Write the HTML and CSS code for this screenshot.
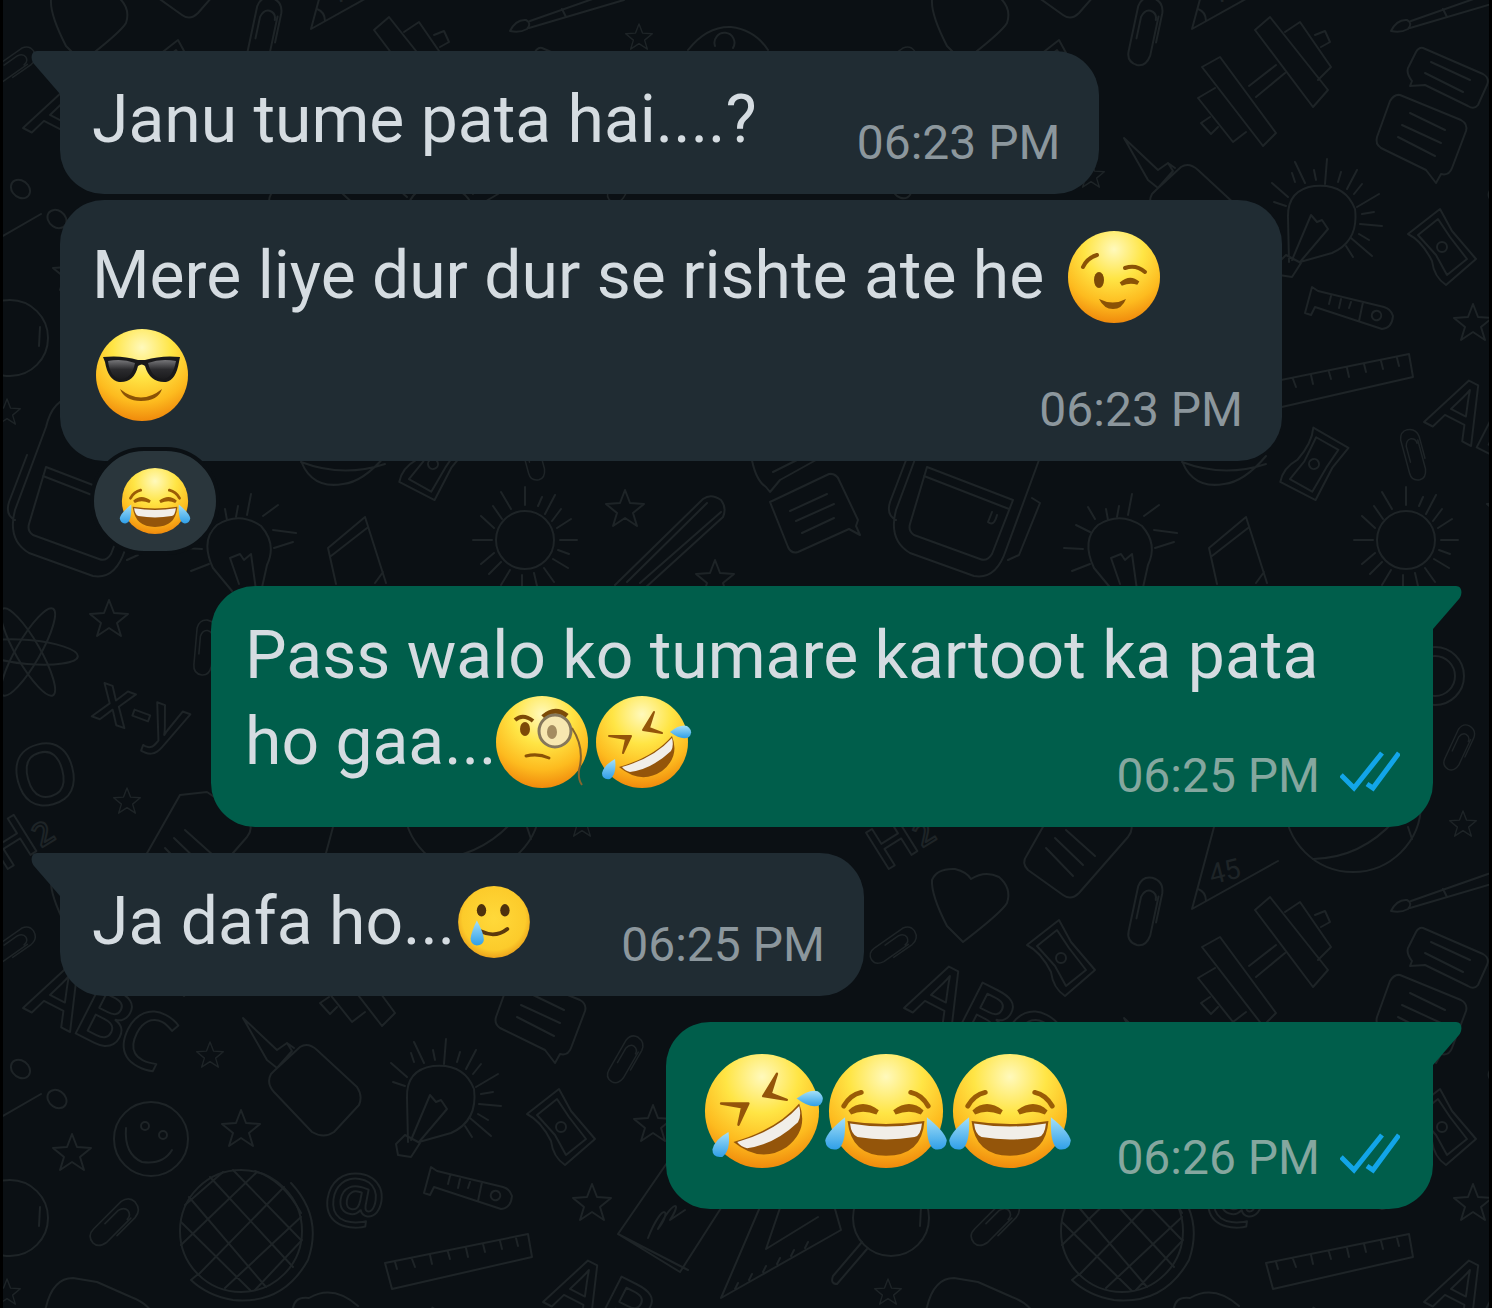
FILE: index.html
```
<!DOCTYPE html>
<html lang="en">
<head>
  <meta charset="UTF-8" />
  <meta name="viewport" content="width=device-width, initial-scale=1.0"/>
  <title>Chat</title>
  <link rel="stylesheet" href="styles.css">
</head>
<body>
  <svg class="doodles" aria-hidden="true">
    <defs>
      <radialGradient id="face" cx="0.5" cy="0.2" r="0.8">
        <stop offset="0" stop-color="#fff9bc"/>
        <stop offset="0.4" stop-color="#ffe545"/>
        <stop offset="0.75" stop-color="#fdbb1f"/>
        <stop offset="1" stop-color="#f08a0c"/>
      </radialGradient>
      <radialGradient id="flat" cx="0.5" cy="0.45" r="0.55">
        <stop offset="0" stop-color="#ffd93a"/>
        <stop offset="0.8" stop-color="#fccb2b"/>
        <stop offset="1" stop-color="#eda51c"/>
      </radialGradient>
      <linearGradient id="tear" x1="0" y1="0" x2="0" y2="1">
        <stop offset="0" stop-color="#a5e0f8"/>
        <stop offset="1" stop-color="#2f9fe8"/>
      </linearGradient>
      <linearGradient id="lens" x1="0" y1="0" x2="0" y2="1">
        <stop offset="0" stop-color="#77777a"/>
        <stop offset="0.5" stop-color="#2b2b2e"/>
        <stop offset="1" stop-color="#1b1b1d"/>
      </linearGradient>

      <symbol id="wink" viewBox="0 0 100 100">
        <circle cx="50" cy="50" r="46" fill="url(#face)"/>
        <g fill="none" stroke="#8a5206" stroke-width="4" stroke-linecap="round">
          <path d="M19 40Q23 31 33 28"/>
          <path d="M61 41Q72 37 81 45"/>
          <path d="M57 57Q66 49 74 56Q66 53 57 57Z" fill="#8a5206"/>
        </g>
        <ellipse cx="35" cy="53" rx="5" ry="8" fill="#7c4a07"/>
        <path d="M35 72Q49 79 62 72Q58 82 49 82Q40 82 35 72Z" fill="#8a5206"/>
      </symbol>

      <symbol id="cool" viewBox="0 0 100 100">
        <circle cx="50" cy="50" r="46" fill="url(#face)"/>
        <path d="M28 64Q49 81 70 64Q66 76 49 76Q33 76 28 64Z" fill="#8a5206"/>
        <path d="M11 32Q30 30 46 35H53Q70 30 88 32L87 37Q84 55 74 57Q58 58 53 41Q50 38 46 41Q42 58 27 57Q16 55 13 37Z" fill="#19191b"/>
        <path d="M16 36Q30 33 43 38Q40 54 28 54Q18 52 16 36ZM84 36Q69 33 56 38Q60 54 72 54Q81 52 84 36Z" fill="url(#lens)"/>
      </symbol>

      <symbol id="joy" viewBox="0 0 100 100">
        <circle cx="50" cy="50" r="46" fill="url(#face)"/>
        <g fill="none" stroke="#9a5c06" stroke-width="4" stroke-linecap="round">
          <path d="M16 46Q21 37 30 35"/>
          <path d="M70 35Q79 37 84 46"/>
          <path d="M21 51Q31 42 43 51Q31 46 21 51Z" fill="#9a5c06"/>
          <path d="M57 51Q69 42 79 51Q69 46 57 51Z" fill="#9a5c06"/>
        </g>
        <path d="M19 58Q50 63 81 58Q79 86 50 86Q22 86 19 58Z" fill="#94550a"/>
        <path d="M21 60Q50 65 79 60Q78 70 73 71Q50 75 27 71Q22 69 21 60Z" fill="#f1eee8"/>
        <path d="M17 55Q2 67 1 74Q2 82 10 81Q18 79 17 55Z" fill="url(#tear)"/>
        <path d="M83 55Q98 67 99 74Q98 82 90 81Q82 79 83 55Z" fill="url(#tear)"/>
      </symbol>

      <symbol id="rofl" viewBox="0 0 100 100">
        <circle cx="50" cy="50" r="46" fill="url(#face)"/>
        <g fill="#94550a" stroke="#94550a" stroke-width="2" stroke-linejoin="round">
          <path d="M17 44L39 44L31 61L34 47Z"/>
          <path d="M62 20L51 38L70 41L57 36Z"/>
        </g>
        <path d="M27 75Q62 65 80 44Q88 65 70 79Q49 93 27 75Z" fill="#94550a"/>
        <path d="M30 75Q62 66 80 46Q82 54 79 59Q60 77 38 80Q33 79 30 75Z" fill="#f1eee8"/>
        <path d="M78 40Q88 32 95 34Q102 39 97 45Q90 49 78 40Z" fill="url(#tear)"/>
        <path d="M23 67Q25 82 18 87Q10 88 10 81Q12 73 23 67Z" fill="url(#tear)"/>
      </symbol>

      <symbol id="monocle" viewBox="0 0 100 100">
        <circle cx="50" cy="50" r="46" fill="url(#face)"/>
        <path d="M23 28Q31 21 41 29" fill="none" stroke="#7c4a07" stroke-width="4"/>
        <ellipse cx="33" cy="37" rx="5" ry="7" fill="#7c4a07"/>
        <path d="M51 25Q63 14 75 24" fill="none" stroke="#7c4a07" stroke-width="5"/>
        <circle cx="63" cy="39" r="16" fill="#f7e7b0" stroke="#85775c" stroke-width="3"/>
        <ellipse cx="60" cy="40" rx="5" ry="7" fill="#a48c60"/>
        <path d="M80 36Q93 56 87 78Q86 88 90 93" fill="none" stroke="#85652e" stroke-width="2"/>
        <path d="M34 64Q46 61 57 66" fill="none" stroke="#8a5206" stroke-width="3" stroke-linecap="round"/>
      </symbol>

      <symbol id="tearful" viewBox="0 0 100 100">
        <circle cx="50" cy="50" r="46" fill="url(#flat)"/>
        <ellipse cx="34" cy="35" rx="6" ry="8" fill="#4e310d"/>
        <ellipse cx="64" cy="35" rx="6" ry="8" fill="#4e310d"/>
        <path d="M33 62Q52 71 67 59" fill="none" stroke="#5b380c" stroke-width="5" stroke-linecap="round"/>
        <path d="M28 48Q37 64 37 73Q36 80 28 80Q20 79 20 71Q21 62 28 48Z" fill="url(#tear)"/>
      </symbol>

      <symbol id="ticks" viewBox="0 0 60 42">
        <path d="M1 24L14 37L42 2M27 33L33 37L59 2" fill="none" stroke="#12a5e8" stroke-width="5"/>
      </symbol>

      <path id="star" d="M0-20L5-7L19-6L8 3L12 16L0 8L-12 16L-8 3L-19-6L-5-7Z"/>
      <path id="clip" d="M10-18V22Q8 34-1 34Q-12 33-12 22V-24Q-10-35 0-35Q12-34 13-22V8M-7 8V-14Q-5-22 1-22Q8-21 8-14"/>
      <path id="sharpener" d="M-2-38L10-16L34 12L4 38Q-8 30-10 14Q-20-6-34-13ZM-4-28L8-10L25 12L5 28L-6 8L-24-12ZM-5 0A5 5 0 1 0 5 0A5 5 0 1 0-5 0"/>

      <!-- one wallpaper tile, 881 x 880 -->
      <g id="tile">
        <path d="M944 926Q928 895 929 880Q934 868 952 869Q964 872 968 879Q982 870 996 877Q1009 888 1004 903Q999 912 960 942Z"/>
        <path d="M1252 30L1267 17L1325 90L1310 107ZM1282 32L1297 22L1328 67L1315 80M1312 35L1322 31L1327 42L1318 47M1199 67L1217 57L1273 133L1260 146ZM1212 88L1195 98L1230 142L1243 132M1207 117L1198 123L1208 134L1215 127M1246 86L1273 65M1253 97L1282 73"/>
        <path d="M1420 48L1480 74Q1487 78 1484 85L1475 105Q1471 110 1465 106L1422 85L1407 86L1409 81Q1402 72 1406 66L1413 52Q1416 47 1420 48ZM1428 62L1467 80M1422 73L1460 92"/>
        <path d="M1397 95L1458 120Q1465 124 1463 131L1449 168Q1446 176 1438 174L1433 183L1423 170L1378 148Q1372 144 1374 137L1387 101Q1391 94 1397 95ZM1407 113L1442 130M1399 125L1438 143M1395 137L1432 156"/>
        <path d="M240 1018L274 1050L284 1043L289 1051L274 1068L264 1060ZM284 1043L291 1048M272 1070L297 1047Q305 1042 314 1050L354 1087Q360 1096 356 1105L331 1132Q321 1139 309 1132L271 1092Q263 1083 268 1074Z"/>
        <g>
          <path d="M405 1142L404 1098Q403 1070 430 1066Q461 1063 471 1089Q475 1121 448 1133L416 1142M408 1140L427 1095L433 1102L438 1100L444 1109L416 1142M402 1135L417 1143L408 1157L395 1155L393 1144Z"/>
          <path d="M388 1063L404 1077M411 1042L421 1063M443 1039L441 1064M473 1050L463 1069M495 1074L473 1087M498 1106L476 1104M488 1136L467 1118M390 1082L402 1086M408 1053L411 1062M430 1050L432 1060M457 1052L454 1062M478 1064L470 1074M490 1092L478 1094M485 1120L475 1114M469 1137L462 1126"/>
        </g>
        <use href="#sharpener" x="558" y="1127"/>
        <use href="#sharpener" x="1058" y="958"/>
        <use href="#sharpener" transform="translate(430 464) rotate(68)"/>
        <path d="M428 1167L421 1193L427 1195L431 1187L498 1209Q508 1208 509 1196Q507 1189 500 1187L434 1171ZM447 1176L445 1184M457 1179L455 1188M467 1182L465 1188M479 1182L475 1201M488 1194A4 4 0 1 0 497 1197A4 4 0 1 0 488 1194"/>
        <path d="M382 1263L525 1234L529 1257L389 1289ZM392 1262L394 1269M409 1259L412 1267M427 1255L429 1264M445 1252L447 1259M463 1248L465 1257M480 1244L482 1252M497 1241L499 1249M513 1238L515 1246"/>
        <circle cx="148" cy="1139" r="37"/>
        <circle cx="142" cy="1126" r="4"/>
        <circle cx="160" cy="1135" r="4"/>
        <path d="M123 1128Q121 1154 139 1162Q160 1165 169 1150"/>
        <circle cx="238" cy="1231" r="61"/>
        <path d="M288 1183Q320 1217 305 1260Q280 1305 230 1300Q205 1296 188 1280L194 1275M207 1177L290 1267M186 1197L263 1287M178 1222L248 1291M230 1170L298 1240M252 1171Q280 1180 298 1213M281 1187L195 1275M254 1172L178 1245M298 1217L222 1288M299 1240L252 1290M182 1205L220 1172"/>
        <text class="sketch" x="321" y="1222" font-size="68" transform="rotate(8 353 1200)">@</text>
        <circle cx="888" cy="1218" r="38"/>
        <path d="M859 1242L830 1276Q827 1284 834 1284L864 1249M918 1207L917 1226"/>
        <use href="#star" x="650" y="1125"/>
        <use href="#star" x="589" y="1204"/>
        <use href="#star" x="238" y="1130"/>
        <use href="#star" x="69" y="1154"/>
        <use href="#star" transform="translate(207 1056) scale(.7)"/>
        <use href="#star" x="622" y="510"/>
        <use href="#star" x="106" y="620"/>
        <use href="#star" x="712" y="580"/>
        <use href="#star" transform="translate(124 802) scale(.7)"/>
        <use href="#star" transform="translate(1460 825) scale(.7)"/>
        <use href="#star" transform="translate(636 38) scale(.7)"/>
        <use href="#star" transform="translate(885 1293) scale(.7)"/>
        <use href="#clip" transform="translate(1142 912) rotate(12)"/>
        <use href="#clip" transform="translate(622 1060) rotate(30) scale(.75)"/>
        <use href="#clip" transform="translate(111 1223) rotate(45) scale(.85)"/>
        <use href="#clip" transform="translate(890 946) rotate(55) scale(.75)"/>
        <use href="#clip" transform="translate(1411 455) rotate(-15) scale(.75)"/>
        <use href="#clip" transform="translate(1456 748) rotate(25) scale(.7)"/>
        <use href="#clip" transform="translate(202 648) rotate(5) scale(.8)"/>
        <g class="sketch" font-size="80">
          <text transform="translate(20 1008) rotate(27)">A</text>
          <text transform="translate(66 1030) rotate(27)">B</text>
          <text transform="translate(108 1052) rotate(27)">C</text>
          <text transform="translate(540 1302) rotate(27)">A</text>
          <text transform="translate(586 1324) rotate(27)">B</text>
        </g>
        <path d="M0 1116L38 1094M63 1098A10 8 40 1 0 45 1100A10 8 40 1 0 63 1098M27 1072A10 8 40 1 0 8 1066A10 8 40 1 0 27 1072"/>
        <path d="M1211 827L1189 909L1275 861M1195 889Q1203 892 1203 901"/>
        <text class="angle" x="1206" y="882" font-size="28" transform="rotate(-14 1218 872)">45</text>
        <circle cx="1350" cy="804" r="68"/>
        <path d="M1310 859Q1358 858 1392 820M1405 827L1409 839"/>
        <path d="M1388 911Q1394 899 1404 900Q1410 903 1405 909Q1398 913 1388 911ZM1408 901L1502 868M1407 908L1502 880M1440 889L1444 897"/>
        <path d="M1058 795L1024 855Q1018 863 1025 870L1060 895Q1068 901 1076 893L1125 837Q1132 828 1126 820L1085 792ZM1043 848L1070 876M1052 838L1080 865M1063 830L1092 856"/>
        <path d="M767 502L826 474Q833 473 836 480L855 520L853 526L857 535L846 529L795 552Q788 554 785 547ZM787 511L824 494M793 521L831 504M799 533L831 518M748 455Q752 480 763 487L767 492L777 480L822 455M770 472L800 457"/>
        <path d="M43 427Q50 398 70 398L94 402L128 417Q158 428 155 460L122 550Q112 580 90 576L26 553Q4 540 12 510ZM43 467L129 500L108 554Q103 562 96 559L30 535Q24 531 26 524ZM40 476L125 509M24 455L6 502Q2 515 12 520M148 498L156 503L135 555L124 560M108 512L104 522Q110 527 113 515"/>
        <path d="M296 455Q306 490 340 484Q360 482 382 456M298 462Q340 478 382 464"/>
        <g>
          <path d="M229 591L210 568Q197 540 214 525Q236 511 258 526Q274 544 264 565L258 592M236 584L227 558L237 554L241 560L248 554L253 590"/>
          <path d="M222 509L224 520M235 506L233 517M248 494L244 515M260 516L275 505M270 530L293 533M271 548L290 542M188 571L206 564M180 548L199 549M192 525L206 532M204 507L211 519"/>
        </g>
        <circle cx="522" cy="540" r="29"/>
        <path d="M522 505V487M535 506L539 497M542 514L552 495M549 521L558 509M554 528L568 519M557 540H574M555 550L566 554M550 559L565 568M541 568L551 582M531 573L534 586M519 575V588M507 570L498 585M498 562L486 574M491 553L478 564M489 540H470M491 528L478 516M499 519L490 506M508 509L498 492"/>
        <path d="M333 584L325 548L362 517L383 583M328 556L364 528M372 583L380 572"/>
        <path d="M612 585L700 499Q708 493 718 500Q724 508 720 517L642 588M624 582L704 503M637 583L718 512"/>
        <path d="M685 1270L615 1234L666 1160M615 1234L677 1272L727 1194M645 1238C660 1200 670 1210 655 1229C670 1200 680 1200 667 1220L682 1210"/>
        <path d="M760 1200L718 1298L838 1230L828 1195M778 1205L763 1249L815 1217M732 1289L735 1283M746 1280L749 1274M760 1272L763 1266M774 1264L777 1258M788 1256L791 1250M802 1248L805 1242"/>
        <ellipse cx="25" cy="652" rx="12" ry="50" transform="rotate(30 25 652)"/>
        <ellipse cx="25" cy="652" rx="12" ry="50" transform="rotate(95 25 652)"/>
        <ellipse cx="25" cy="652" rx="12" ry="50" transform="rotate(-30 25 652)"/>
        <g class="sketch">
          <text transform="translate(88 716) rotate(20)" font-size="66">x-y</text>
          <text transform="translate(18 812) rotate(-15)" font-size="84">O</text>
          <text transform="translate(0 872) rotate(-32)" font-size="60">H<tspan font-size="32">2</tspan></text>
        </g>
        <circle cx="1432" cy="676" r="29"/>
        <circle cx="1432" cy="676" r="20"/>
        <path d="M685 50Q704 26 728 27Q752 30 765 50M712 46A10 10 0 1 1 730 48"/>
        <path d="M290 1308Q292 1296 306 1298Q330 1284 355 1306"/>
      </g>
    </defs>

    <g class="wallpaper">
      <use href="#tile" x="-881" y="-880"/>
      <use href="#tile" y="-880"/>
      <use href="#tile" x="881" y="-880"/>
      <use href="#tile" x="-881"/>
      <use href="#tile"/>
      <use href="#tile" x="881"/>
      <use href="#tile" x="-881" y="880"/>
      <use href="#tile" y="880"/>
      <use href="#tile" x="881" y="880"/>
    </g>
  </svg>

  <main class="chat">
    <div class="bubble in">
      <svg class="tail" viewBox="0 0 30 44" aria-hidden="true"><path d="M30 0H6C0 0-1 8 3 13L29 43H30Z"/></svg>
      <div class="line last">
        <span class="text">Janu tume pata hai....?</span>
        <time class="meta">06:23 PM</time>
      </div>
    </div>

    <div class="bubble in wide follow">
      <div class="line tall">
        <span class="text">Mere liye dur dur se rishte ate he</span>
        <svg class="emoji spaced" role="img" aria-label="winking face"><use href="#wink"/></svg>
      </div>
      <div class="line tall last">
        <svg class="emoji" role="img" aria-label="smiling face with sunglasses"><use href="#cool"/></svg>
        <time class="meta">06:23 PM</time>
      </div>
    </div>
    <button class="reaction" type="button" aria-label="Reaction: tears of joy">
      <svg class="emoji small" aria-hidden="true"><use href="#joy"/></svg>
    </button>

    <div class="bubble out wide">
      <svg class="tail" viewBox="0 0 30 44" aria-hidden="true"><path d="M0 0H24C30 0 31 8 27 13L1 43H0Z"/></svg>
      <div class="line">
        <span class="text">Pass walo ko tumare kartoot ka pata</span>
      </div>
      <div class="line last">
        <span class="text">ho gaa...</span>
        <svg class="emoji" role="img" aria-label="face with monocle"><use href="#monocle"/></svg>
        <svg class="emoji" role="img" aria-label="rolling on the floor laughing"><use href="#rofl"/></svg>
        <span class="meta"><time>06:25 PM</time><svg class="ticks" role="img" aria-label="Read"><use href="#ticks"/></svg></span>
      </div>
    </div>

    <div class="bubble in">
      <svg class="tail" viewBox="0 0 30 44" aria-hidden="true"><path d="M30 0H6C0 0-1 8 3 13L29 43H30Z"/></svg>
      <div class="line last">
        <span class="text">Ja dafa ho...</span>
        <svg class="emoji medium" role="img" aria-label="smiling face with tear"><use href="#tearful"/></svg>
        <time class="meta">06:25 PM</time>
      </div>
    </div>

    <div class="bubble out">
      <svg class="tail" viewBox="0 0 30 44" aria-hidden="true"><path d="M0 0H24C30 0 31 8 27 13L1 43H0Z"/></svg>
      <div class="line big last">
        <svg class="emoji large" role="img" aria-label="rolling on the floor laughing"><use href="#rofl"/></svg>
        <svg class="emoji large" role="img" aria-label="tears of joy"><use href="#joy"/></svg>
        <svg class="emoji large" role="img" aria-label="tears of joy"><use href="#joy"/></svg>
        <span class="meta"><time>06:26 PM</time><svg class="ticks" role="img" aria-label="Read"><use href="#ticks"/></svg></span>
      </div>
    </div>
  </main>
</body>
</html>
```
FILE: styles.css
```
* {
  box-sizing: border-box;
}

body {
  margin: 0;
  min-height: 100vh;
  position: relative;
  overflow-x: hidden;
  background-color: #0b1014;
  border: solid #000;
  border-width: 0 3px;
  font-family: Roboto, sans-serif;
  color: #d5dce1;
}

/* wallpaper */
.doodles {
  position: absolute;
  top: 0;
  left: 0;
  width: 100%;
  height: 100%;
}

.wallpaper {
  fill: none;
  stroke: #1e2427;
  stroke-width: 2;
  stroke-linejoin: round;
  stroke-linecap: round;
}

.sketch {
  font-family: "Open Sans", sans-serif;
  font-weight: 600;
}

.angle {
  fill: #1e2427;
  stroke: none;
}

.chat {
  position: relative;
  display: flex;
  flex-direction: column;
  align-items: flex-start;
  gap: 26px;
  padding: 51px 56px 64px 57px;
}

/* bubbles */
.bubble {
  position: relative;
  padding: 26px 39px 23px 32px;
  border-radius: 44px;
  background-color: #202c33;
}

.in {
  border-top-left-radius: 0;
}

.out {
  align-self: flex-end;
  padding: 27px 33px 23px 34px;
  border-top-right-radius: 0;
  background-color: #005e4b;
}

.follow {
  margin-top: -20px;
  padding-top: 28px;
  border-top-left-radius: 44px;
}

.wide {
  width: 89%;
}

.tail {
  position: absolute;
  top: 0;
  width: 30px;
  height: 44px;
}

.in .tail {
  right: 100%;
  margin-right: -1px;
  fill: #202c33;
}

.out .tail {
  left: 100%;
  margin-left: -1px;
  fill: #005e4b;
}

.line {
  display: flex;
  align-items: flex-start;
  font-size: 66px;
  line-height: 86px;
  white-space: nowrap;
}

.last {
  min-height: 94px;
}

.wide .last {
  min-height: 105px;
}

.tall {
  line-height: 96px;
}

.wide .tall.last {
  min-height: 112px;
}

.line.big {
  min-height: 137px;
}

/* emoji */
.emoji {
  flex: none;
  width: 100px;
  height: 100px;
  margin: -7px 0;
}

.text + .emoji {
  margin-left: -4px;
}

.tall .emoji {
  margin: -1px 0;
}

.tall .spaced {
  margin-left: 20px;
}

.emoji.medium {
  width: 78px;
  height: 78px;
  margin: 4px 0;
}

.emoji.large {
  width: 124px;
  height: 124px;
  margin: 0;
}

.emoji.small {
  width: 72px;
  height: 72px;
  margin: 0;
}

/* time and read ticks */
.meta {
  display: flex;
  align-items: center;
  align-self: flex-end;
  margin-left: auto;
  padding-left: 100px;
  font-size: 48px;
  line-height: 56px;
  color: #8c979d;
}

.medium + .meta {
  padding-left: 88px;
}

.large + .meta {
  padding-left: 44px;
}

.out .meta {
  color: #85a79f;
}

.ticks {
  width: 60px;
  height: 42px;
  margin-left: 20px;
  margin-bottom: 8px;
}

.reaction {
  display: flex;
  align-items: center;
  justify-content: center;
  position: relative;
  width: 130px;
  height: 108px;
  margin: -40px 0 5px 30px;
  padding: 0;
  border: 4px solid #0b1014;
  border-radius: 54px;
  background-color: #2a363c;
}
```
